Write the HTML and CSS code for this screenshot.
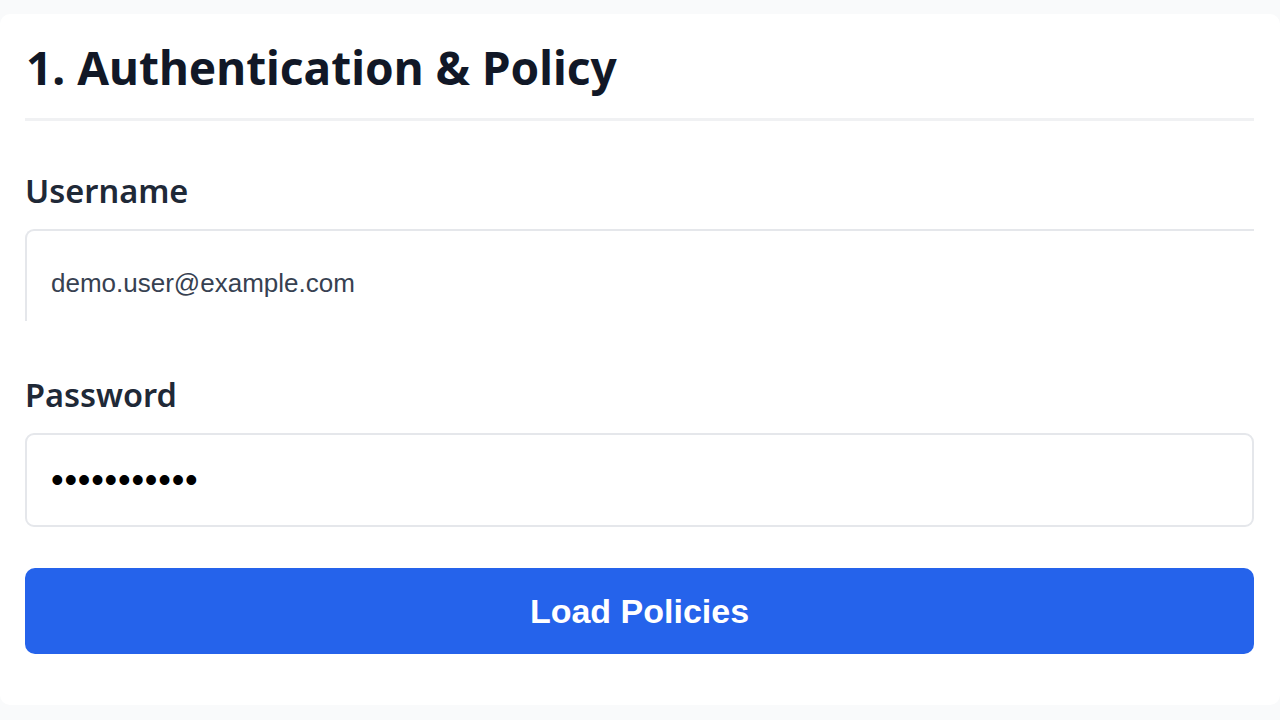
FILE: index.html
```html
<!DOCTYPE html>
<html lang="en">
<head>
<meta charset="utf-8">
<title>Authentication &amp; Policy</title>
<link rel="stylesheet" href="styles.css">
</head>
<body>
<main class="page">
  <section class="card">
    <h2 class="card-title">1. Authentication &amp; Policy</h2>
    <form class="form">
      <div class="field">
        <label class="field-label" for="username">Username</label>
        <div class="input input--clipped"><span class="input-text">demo.user@example.com</span></div>
      </div>
      <div class="field">
        <label class="field-label" for="password">Password</label>
        <div class="input"><span class="input-dots">•••••••••••</span></div>
      </div>
      <button type="button" class="btn-primary">Load Policies</button>
    </form>
  </section>
</main>
</body>
</html>
```

FILE: styles.css
```css
html, body {
  margin: 0;
  padding: 0;
  background: #f9fafb;
}
body {
  font-family: "Noto Sans", "Open Sans", sans-serif;
  color: #111827;
}
.page {
  padding-top: 14px;
  padding-bottom: 15px;
}
.card {
  background: #ffffff;
  height: 691px;
  box-sizing: border-box;
  padding: 0 26px 0 25px;
  border-radius: 10px;
}
.card-title {
  margin: 0;
  padding-top: 25px;
  padding-bottom: 22px;
  font-size: 46px;
  line-height: 57px;
  font-weight: 700;
  color: #111827;
  border-bottom: 3px solid #f0f1f3;
  padding-left: 1px;
}
.form {
  display: flex;
  flex-direction: column;
}
.field {
  display: flex;
  flex-direction: column;
}
.field:first-child {
  margin-top: 50px;
}
.field + .field {
  margin-top: 46px;
}
.field-label {
  font-size: 32.5px;
  line-height: 40px;
  font-weight: 600;
  color: #1f2937;
  margin-bottom: 18px;
}
.input {
  height: 94px;
  box-sizing: border-box;
  border: 2px solid #e5e7eb;
  border-radius: 9px;
  display: flex;
  align-items: center;
  padding-left: 24px;
  background: #fff;
}
.input--clipped {
  border-right: none;
  border-bottom: none;
  border-bottom-left-radius: 0;
  border-top-right-radius: 0;
  height: 92px;
  align-items: flex-start;
  padding-top: 37px;
  margin-bottom: 8px;
}
.input-text {
  font-family: "Liberation Sans", Arial, sans-serif;
  font-size: 26px;
  color: #374151;
}
.input-dots {
  font-family: "Liberation Sans", Arial, sans-serif;
  font-size: 36px;
  color: #000;
  letter-spacing: 0.8px;
}
.btn-primary {
  margin-top: 41px;
  height: 86px;
  border: none;
  border-radius: 10px;
  background: #2563eb;
  color: #fff;
  font-family: "Liberation Sans", Arial, sans-serif;
  font-weight: 700;
  font-size: 34px;
  cursor: pointer;
}
```
